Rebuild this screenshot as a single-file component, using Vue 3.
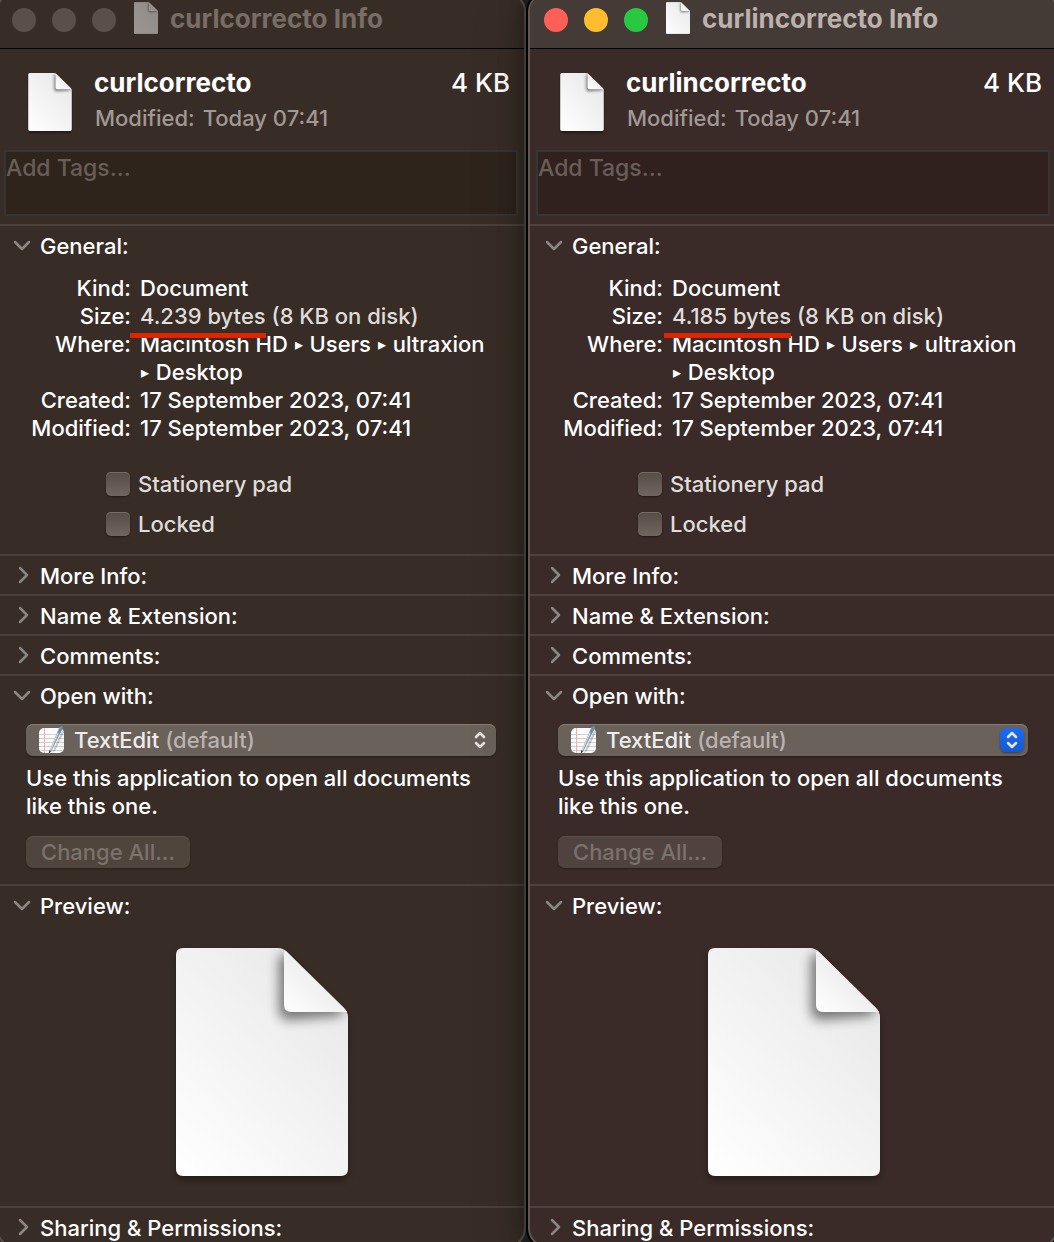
<script setup>
import { reactive } from 'vue'

const windows = reactive([
  { id: 'left', active: false, name: 'curlcorrecto', bytes: '4.239 bytes', overhang: 10 },
  { id: 'right', active: true, name: 'curlincorrecto', bytes: '4.185 bytes', overhang: 8 },
].map((w) => ({ ...w, stationery: false, locked: false, tags: '', app: 'TextEdit' })))

const collapsed = ['More Info:', 'Name & Extension:', 'Comments:']
const date = '17 September 2023, 07:41'
</script>

<template>
  <svg class="defs" aria-hidden="true">
    <defs>
      <linearGradient id="paper" x1="0.1" y1="1" x2="0.8" y2="0.2">
        <stop offset="0" stop-color="#fefefe" />
        <stop offset="1" stop-color="#ebebeb" />
      </linearGradient>
      <linearGradient id="fold" x1="0" y1="1" x2="0.6" y2="0.4">
        <stop offset="0" stop-color="#ffffff" />
        <stop offset="1" stop-color="#ececec" />
      </linearGradient>
      <filter id="soft" x="-50%" y="-50%" width="200%" height="200%">
        <feGaussianBlur stdDeviation="6" />
      </filter>
      <clipPath id="sheet">
        <path d="M7 0H102Q107 0 111 4L168 60Q172 64 172 69V221Q172 228 165 228H7Q0 228 0 221V7Q0 0 7 0Z" />
      </clipPath>
      <symbol id="doc" viewBox="0 0 172 228">
        <g clip-path="url(#sheet)">
          <rect width="172" height="228" fill="url(#paper)" />
          <path d="M103 10V62Q103 72 114 72L162 68L170 62L110 4Z" fill="#000" opacity="0.5" filter="url(#soft)" />
          <path d="M108 0V57Q108 64 115 64H172V0Z" fill="url(#fold)" />
        </g>
      </symbol>
    </defs>
  </svg>

  <main class="desktop">
    <div class="windows">
      <section v-for="w in windows" :key="w.id" class="window" :class="{ active: w.active }">
        <header class="titlebar">
          <button class="light close" aria-label="Close"></button>
          <button class="light minimise" aria-label="Minimise"></button>
          <button class="light zoom" aria-label="Zoom"></button>
          <svg class="title-icon" aria-hidden="true"><use href="#doc" /></svg>
          <h1 class="title">{{ w.name }} Info</h1>
        </header>

        <div class="summary">
          <svg class="file-icon" aria-hidden="true"><use href="#doc" /></svg>
          <div class="summary-text">
            <div class="summary-line">
              <strong>{{ w.name }}</strong>
              <span>4 KB</span>
            </div>
            <p class="summary-date"><span>Modified:</span><span>Today 07:41</span></p>
          </div>
        </div>

        <textarea v-model="w.tags" class="tags" placeholder="Add Tags..." aria-label="Tags"></textarea>

        <section class="group">
          <button class="heading" aria-expanded="true">
            <svg class="chevron" viewBox="0 0 20 20"><path d="M3 6L10 13L17 6" /></svg>General:
          </button>
          <dl class="details">
            <dt>Kind:</dt>
            <dd>Document</dd>
            <dt>Size:</dt>
            <dd class="dim">
              <span class="marked">{{ w.bytes }}<i class="mark" :style="{ left: -w.overhang + 'px' }"></i></span> (8 KB on disk)
            </dd>
            <dt>Where:</dt>
            <dd>Macintosh HD <b class="arrow">▸</b> Users <b class="arrow">▸</b> ultraxion <span class="nowrap"><b class="arrow">▸</b> Desktop</span></dd>
            <dt>Created:</dt>
            <dd>{{ date }}</dd>
            <dt>Modified:</dt>
            <dd>{{ date }}</dd>
          </dl>
          <div class="checks">
            <label><input v-model="w.stationery" type="checkbox" />Stationery pad</label>
            <label><input v-model="w.locked" type="checkbox" />Locked</label>
          </div>
        </section>

        <section v-for="label in collapsed" :key="label" class="group">
          <button class="heading" aria-expanded="false">
            <svg class="chevron" viewBox="0 0 20 20"><path d="M8 2L15 9L8 16" /></svg>{{ label }}
          </button>
        </section>

        <section class="group">
          <button class="heading" aria-expanded="true">
            <svg class="chevron" viewBox="0 0 20 20"><path d="M3 6L10 13L17 6" /></svg>Open with:
          </button>
          <div class="open-with">
            <div class="popup">
              <svg class="app-icon" viewBox="0 0 28 32" aria-hidden="true">
                <rect x="1" y="4" width="25" height="25" rx="5" fill="#fafafa" />
                <path d="M1 10.500H26M1 14.500H26M1 18.500H26M1 22.500H26M3 26.500H24" stroke="#d0d0d0" />
                <path d="M6.500 4V29" stroke="#f3aeab" />
                <path d="M14 29L24 7L26 8L17 27L12 31Z" fill="#000" opacity="0.2" />
                <path d="M11 28L21 4L23.500 2L24.500 3L24 6L13 28L10.500 30Z" fill="#8fa5b3" />
                <path d="M12 27L22 4.500" stroke="#d5e2ea" />
                <path d="M19.500 8L22 3.500L24.500 2L23.500 6L21.500 10Z" fill="#5f8fb4" />
                <path d="M10.500 30L11.500 26L13 27Z" fill="#333" />
              </svg>
              <select :id="'app-' + w.id" v-model="w.app" class="app-select" aria-label="Open with">
                <option>TextEdit</option>
              </select>
              <label :for="'app-' + w.id" class="default">(default)</label>
              <span class="stepper">
                <svg viewBox="0 0 24 24" aria-hidden="true"><path d="M8 9L12 5L16 9M8 15L12 19L16 15" /></svg>
              </span>
            </div>
            <p class="hint">Use this application to open all documents like this one.</p>
            <button class="change" disabled>Change All...</button>
          </div>
        </section>

        <section class="group">
          <button class="heading" aria-expanded="true">
            <svg class="chevron" viewBox="0 0 20 20"><path d="M3 6L10 13L17 6" /></svg>Preview:
          </button>
          <div class="preview">
            <svg class="preview-doc" role="img" aria-label="Document"><use href="#doc" /></svg>
          </div>
        </section>

        <section class="group">
          <button class="heading" aria-expanded="false">
            <svg class="chevron" viewBox="0 0 20 20"><path d="M8 2L15 9L8 16" /></svg>Sharing &amp; Permissions:
          </button>
        </section>
      </section>
    </div>
  </main>
</template>

<style>
body {
  background: #232425;
}
</style>

<style scoped>
.defs {
  position: absolute;
  width: 0;
  height: 0;
}
.desktop {
  overflow: hidden;
  font: 500 22px/28px Inter, "Liberation Sans", sans-serif;
  color: #fff;
}
/* The windows run past the edges of the desktop on every side. */
.windows {
  display: grid;
  grid-template-columns: 1fr 1fr;
  gap: 2px;
  margin: -8px -4px -6px;
}
.window {
  --bar: #382d26;
  --line: #4b413b;
  --field: #2e241c;
  --button: #4f453d;
  box-sizing: border-box;
  min-width: 0;
  border: 2px solid #5a514b;
  border-radius: 20px;
  background: #382d26;
}
.window.active {
  --bar: #443a36;
  --line: #4d403d;
  --field: #30211e;
  --button: #50433f;
  position: relative;
  border-color: #62544f;
  background: #3a2b28;
  box-shadow: 0 0 0 2px #000, 0 0 26px rgba(0, 0, 0, 0.5), 0 10px 60px rgba(0, 0, 0, 0.2);
}
button,
select,
textarea,
input {
  margin: 0;
  padding: 0;
  border: 0;
  font: inherit;
  color: inherit;
}
h1,
p,
dl,
dd {
  margin: 0;
}

.titlebar {
  display: flex;
  align-items: center;
  box-sizing: border-box;
  height: 55px;
  padding: 6px 14px 8px;
  border-bottom: 1px solid #000;
  border-radius: 18px 18px 0 0;
  background: var(--bar);
}
.light {
  width: 24px;
  height: 24px;
  margin-right: 16px;
  border-radius: 50%;
  background: #5b5049;
}
.active .close {
  background: #ff5f57;
}
.active .minimise {
  background: #febc2e;
}
.active .zoom {
  background: #28c840;
}
.title-icon {
  width: 24px;
  height: 32px;
  margin: 0 12px 4px 2px;
  opacity: 0.5;
}
.active .title-icon {
  opacity: 1;
}
.title {
  padding-bottom: 2px;
  font-size: 26px;
  font-weight: 700;
  color: #796e66;
}
.active .title {
  color: #bdb1ac;
}

.summary {
  display: flex;
  height: 101px;
  padding: 24px 14px 0 30px;
  box-sizing: border-box;
}
.file-icon {
  flex: none;
  width: 44px;
  height: 58px;
  filter: drop-shadow(0 2px 1px rgba(0, 0, 0, 0.4));
}
.summary-text {
  flex: 1;
  padding-left: 22px;
}
.summary-line {
  display: flex;
  justify-content: space-between;
  font-size: 26px;
  line-height: 20px;
}
.summary-line strong {
  font-weight: 700;
}
.summary-date {
  display: flex;
  gap: 8px;
  padding: 11px 0 0 1px;
  color: #a09994;
}

.tags {
  display: block;
  box-sizing: border-box;
  width: calc(100% - 12px);
  height: 66px;
  margin: 0 6px 8px;
  padding-top: 2px;
  border: 2px solid #343534;
  background: var(--field);
  font-size: 23px;
  resize: none;
}
.tags::placeholder {
  color: #695e57;
  opacity: 1;
}

.group {
  border-top: 2px solid var(--line);
}
.heading {
  display: flex;
  align-items: center;
  width: 100%;
  height: 38px;
  padding: 2px 14px 0;
  background: none;
  text-align: left;
}
.chevron {
  width: 20px;
  height: 20px;
  margin-right: 8px;
  fill: none;
  stroke: #8c8784;
  stroke-width: 2.5;
  stroke-linecap: round;
  stroke-linejoin: round;
}
.details {
  display: grid;
  grid-template-columns: 133px 1fr;
  column-gap: 9px;
  padding: 10px 14px 30px 0;
}
.details dt {
  text-align: right;
}
.dim,
.checks {
  color: #dfdcda;
}
.marked {
  position: relative;
}
.mark {
  position: absolute;
  right: 0;
  bottom: -9px;
  height: 5px;
  background: #e12400;
}
.arrow {
  margin: 0 1px;
  font-size: 16px;
  font-weight: 400;
  line-height: 1;
  vertical-align: 2px;
}
.nowrap {
  white-space: nowrap;
}
.checks {
  display: flex;
  flex-direction: column;
  align-items: flex-start;
  gap: 16px;
  padding: 0 0 18px 108px;
}
.checks label {
  display: flex;
  align-items: center;
  gap: 8px;
  height: 24px;
}
.checks input {
  width: 24px;
  height: 24px;
  border-radius: 5px;
  appearance: none;
  background: linear-gradient(#564b45, #70665f);
  box-shadow: inset 0 1px 0 #766c66, 0 1px 2px rgba(0, 0, 0, 0.4);
}

.open-with {
  padding: 10px 28px 16px;
}
.popup {
  display: flex;
  align-items: center;
  height: 32px;
  padding: 0 4px 0 12px;
  border-radius: 7px;
  background: #6b615b;
  box-shadow: inset 0 1px 0 #857c77, 0 1px 2px rgba(0, 0, 0, 0.4);
}
.app-icon {
  width: 28px;
  height: 32px;
}
.app-select {
  height: 32px;
  padding-left: 8px;
  appearance: none;
  field-sizing: content;
  background: none;
  color: #efedec;
}
.default {
  margin: 0 auto 0 6px;
  color: #b9b3af;
}
.stepper {
  width: 24px;
  height: 24px;
  border-radius: 6px;
}
.stepper svg {
  display: block;
  fill: none;
  stroke: #e6e3e1;
  stroke-width: 2.5;
  stroke-linecap: round;
  stroke-linejoin: round;
}
.active .stepper {
  background: linear-gradient(#1c6cf0, #1459d2);
  box-shadow: 0 1px 2px rgba(0, 0, 0, 0.4);
}
.hint {
  padding: 8px 0 16px;
}
.change {
  display: block;
  height: 32px;
  padding: 0 15px;
  border-radius: 7px;
  background: var(--button);
  box-shadow: inset 0 1px 0 rgba(255, 255, 255, 0.08), 0 1px 2px rgba(0, 0, 0, 0.3);
  color: #7b726b;
}
.preview {
  display: flex;
  justify-content: center;
  padding: 24px 0 30px 2px;
}
.preview-doc {
  width: 172px;
  height: 228px;
  filter: drop-shadow(0 4px 3px rgba(0, 0, 0, 0.35));
}
</style>
